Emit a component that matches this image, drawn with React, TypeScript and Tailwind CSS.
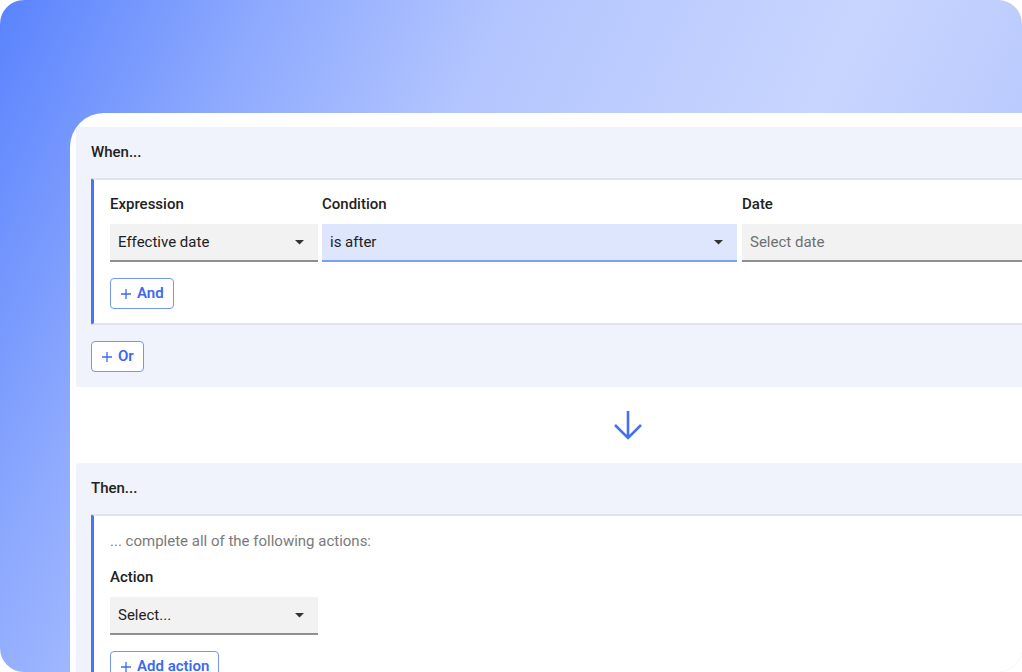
import type { ReactNode } from "react";

// ── Small pieces ────────────────────────────────────────────────────────────

function Caret() {
  return (
    <svg width="9" height="5" viewBox="0 0 9 5" className="shrink-0">
      <path d="M0 0h9L4.5 4.5z" fill="#333" />
    </svg>
  );
}

function Select({
  value,
  width,
  active = false,
  placeholder = false,
  caret = true,
}: {
  value: string;
  width: string;
  active?: boolean;
  placeholder?: boolean;
  caret?: boolean;
}) {
  return (
    <div
      className={`flex h-[38px] ${width} shrink-0 items-center justify-between border-b-2 pl-[8px] pr-[14px] text-[15px] ${
        active
          ? "border-[#7e9ef6] bg-[#dde6fd] text-[#222]"
          : "border-[#8f8f8f] bg-[#f2f2f2] text-[#222]"
      }`}
    >
      <span className={placeholder ? "text-[#6f6f6f]" : ""}>{value}</span>
      {caret && <Caret />}
    </div>
  );
}

function AddButton({ label }: { label: string }) {
  return (
    <button
      type="button"
      className="flex h-[31px] items-center gap-[6px] rounded-[4px] border border-[#7595f6] bg-white pl-[10px] pr-[9px] text-[15px] font-semibold text-[#3f68f2]"
    >
      <svg width="10" height="10" viewBox="0 0 10 10">
        <path d="M5 0v10M0 5h10" stroke="#3f68f2" strokeWidth="1.3" />
      </svg>
      {label}
    </button>
  );
}

function Label({ children }: { children: ReactNode }) {
  return <div className="h-[20px] text-[15px] font-medium leading-[20px] text-[#222]">{children}</div>;
}

function Section({ title, children }: { title: string; children: ReactNode }) {
  return (
    <div className="w-[1104px] rounded-[3px] bg-[#f0f3fb] pl-[15px]">
      <div className="flex h-[51px] items-center text-[15px] font-medium text-[#222]">{title}</div>
      {children}
    </div>
  );
}

function Branch({ children }: { children: ReactNode }) {
  return (
    <div className="rounded-l-[2px] border-y-2 border-l-[3px] border-y-[#e2e4ea] border-l-[#4d72f7] bg-white pl-[16px]">
      {children}
    </div>
  );
}

// ── Page ────────────────────────────────────────────────────────────────────

export default function App() {
  return (
    <div className="bg-white font-['Roboto',sans-serif]">
      <div className="h-[672px] w-[1022px] overflow-hidden rounded-[24px] bg-[linear-gradient(115deg,#5a83fd_0%,#8eaafe_20%,#b3c5fe_38%,#c8d5fe_65%,#a9bdfd_100%)] pl-[70px] pt-[113px]">
        <div className="h-[600px] w-[1200px] rounded-tl-[34px] bg-white pl-[6px] pt-[14px]">
          {/* When */}
          <Section title="When...">
            <Branch>
              <div className="flex gap-[4px] pt-[14px]">
                <div className="flex flex-col gap-[10px]">
                  <Label>Expression</Label>
                  <Select value="Effective date" width="w-[208px]" />
                </div>
                <div className="flex flex-col gap-[10px]">
                  <Label>Condition</Label>
                  <Select value="is after" width="w-[415px]" active />
                </div>
                <div className="ml-[1px] flex flex-col gap-[10px]">
                  <Label>Date</Label>
                  <Select value="Select date" width="w-[380px]" placeholder caret={false} />
                </div>
              </div>
              <div className="pb-[14px] pt-[16px]">
                <AddButton label="And" />
              </div>
            </Branch>
            <div className="pb-[15px] pt-[16px]">
              <AddButton label="Or" />
            </div>
          </Section>

          {/* Arrow */}
          <div className="flex h-[76px] w-[1104px] items-center justify-center">
            <svg width="32" height="32" viewBox="0 0 32 32">
              <path
                d="M16 2v27M3 16l13 13 13-13"
                fill="none"
                stroke="#4570f4"
                strokeWidth="2.6"
              />
            </svg>
          </div>

          {/* Then */}
          <Section title="Then...">
            <Branch>
              <div className="pt-[15px] text-[15px] leading-[20px] text-[#7a7a7a]">
                ... complete all of the following actions:
              </div>
              <div className="mt-[16px] flex flex-col gap-[10px]">
                <Label>Action</Label>
                <Select value="Select..." width="w-[208px]" />
              </div>
              <div className="pb-[14px] pt-[16px]">
                <AddButton label="Add action" />
              </div>
            </Branch>
          </Section>
        </div>
      </div>
    </div>
  );
}
